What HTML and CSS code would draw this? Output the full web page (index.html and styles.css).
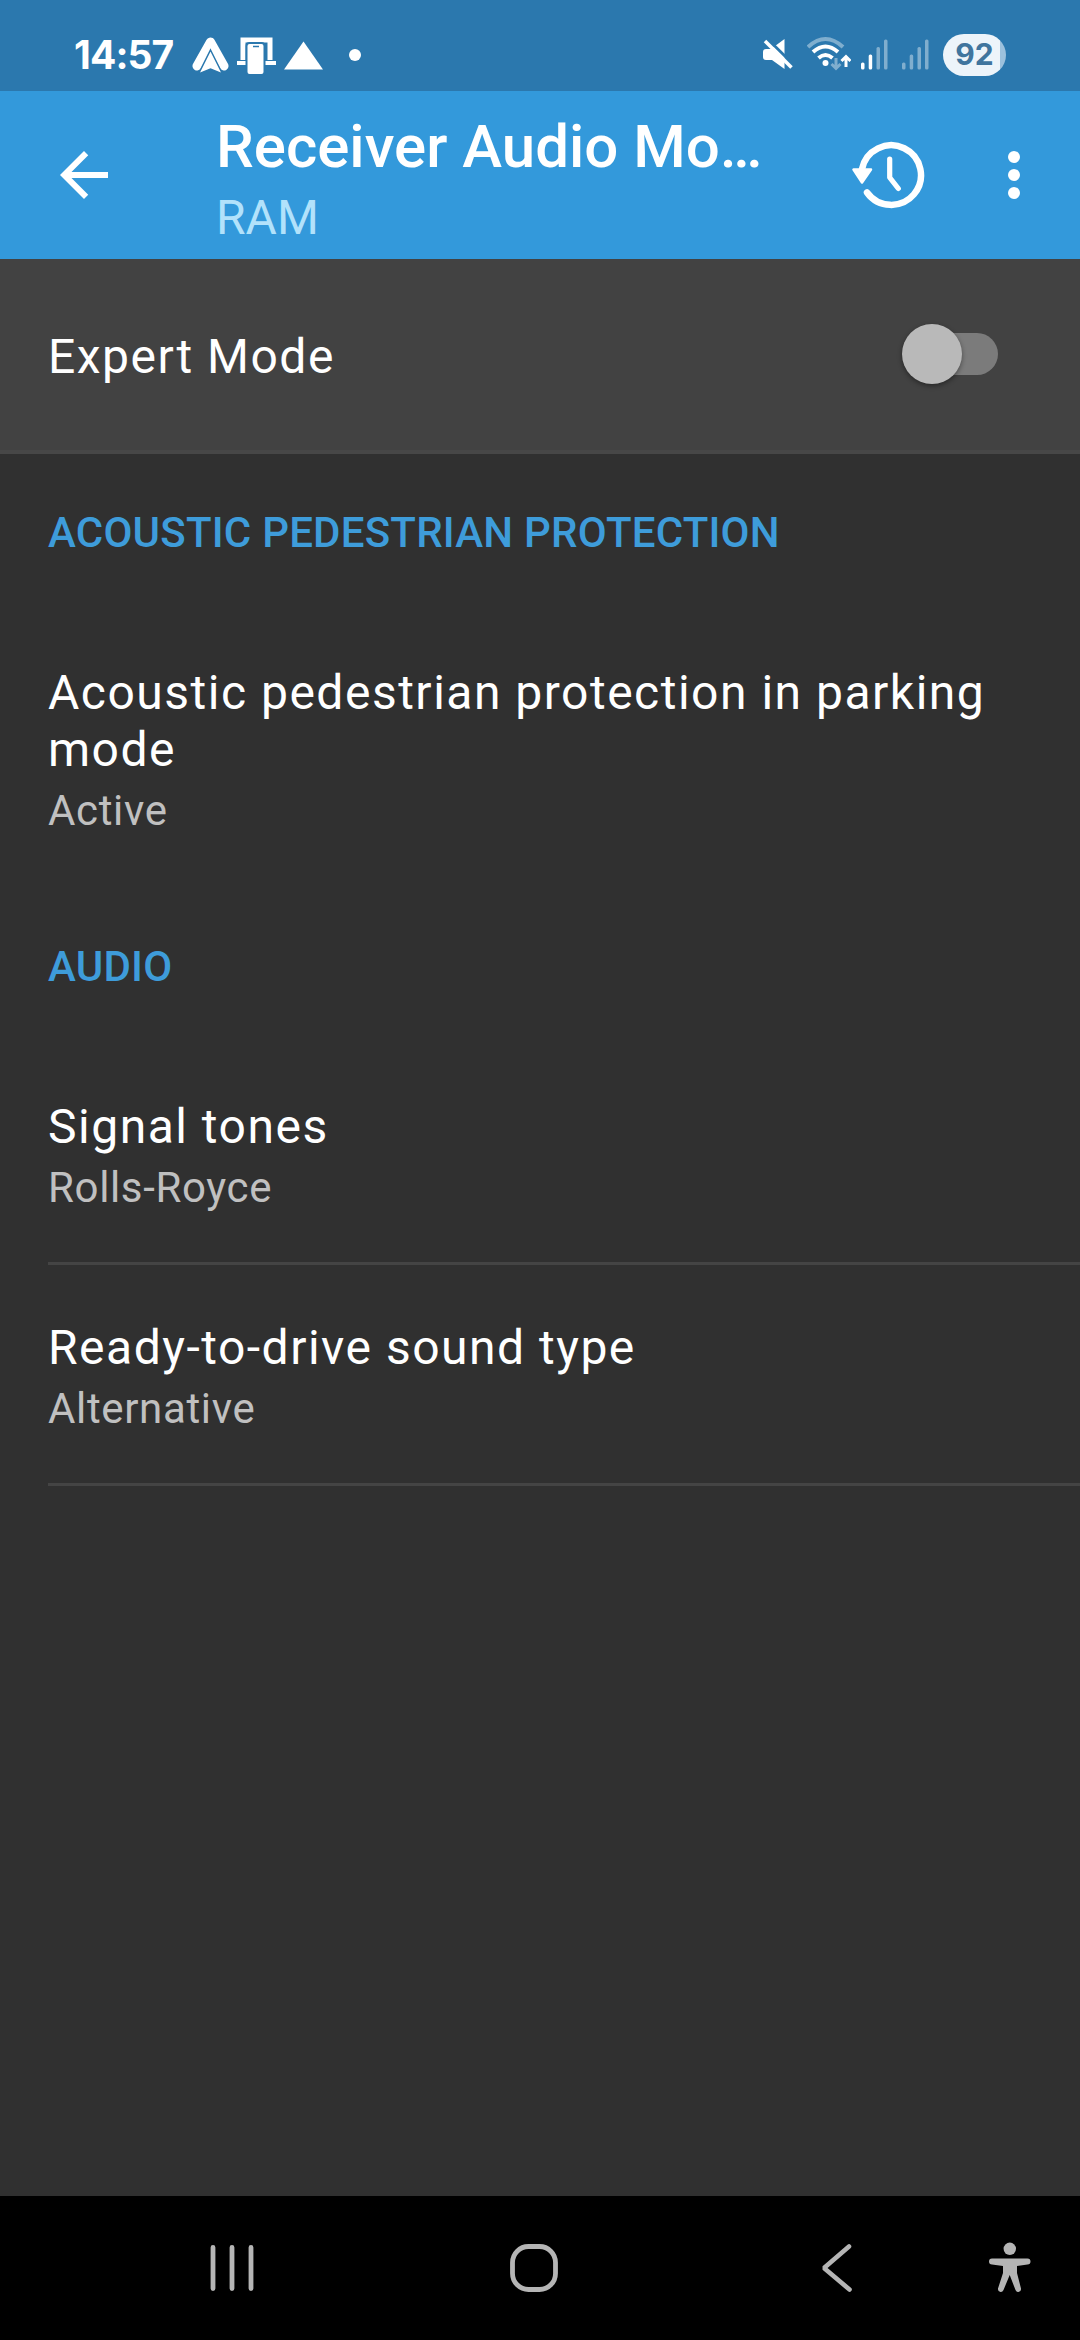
FILE: index.html
```html
<!DOCTYPE html>
<html lang="en">
<head>
<meta charset="utf-8">
<title>Receiver Audio Module</title>
<link rel="stylesheet" href="styles.css">
</head>
<body>
<div class="screen">
  <div class="status-bar">
    <span class="clock">14:57</span>
    <div class="notifications">
      <svg width="37" height="40" viewBox="0 0 37 40"><path d="M5 30L18.500 6L32 30" fill="none" stroke="#fff" stroke-width="9" stroke-linejoin="round" stroke-linecap="round"/><path d="M18.500 14L30.500 38L18.500 33L6.500 38Z" fill="#fff" stroke="#2b78ae" stroke-width="1.500"/></svg>
      <svg width="39" height="40" viewBox="0 0 39 40"><path d="M6 24V4H33V24" fill="none" stroke="#fff" stroke-width="5"/><path d="M0 27H39" stroke="#fff" stroke-width="4"/><rect x="9.500" y="7" width="18" height="32" rx="3" fill="#fff" stroke="#2b78ae" stroke-width="2"/><path d="M16 10.500H22" stroke="#2b78ae" stroke-width="1.500"/></svg>
      <svg width="39" height="40" viewBox="0 0 39 40"><path d="M19.500 5.500L39 33.500H0Z" fill="#fff"/></svg>
      <span class="more-dot"></span>
    </div>
    <div class="indicators">
      <svg width="30" height="44" viewBox="0 0 30 44"><path d="M0 18Q0 15 3 15H8L21.500 5V35L9 26H3Q0 26 0 23Z" fill="#fff"/><path d="M4 4.500L31 31" stroke="#2b78ae" stroke-width="3"/><path d="M2 7L28.500 33.500" stroke="#fff" stroke-width="3.600"/></svg>
      <svg class="wifi" width="44" height="44" viewBox="0 0 44 44" fill="none" stroke="#fff" stroke-width="4"><path d="M1 13Q18.500-3 36 13" opacity=".4"/><path d="M6 18Q18.500 7 31 18M11.500 24Q18.500 18 25.500 24"/><circle cx="18.500" cy="29" r="3" fill="#fff" stroke="none"/><path d="M29 24V34M24.500 30L29 34.500L33.500 30" stroke-width="3" opacity=".4"/><path d="M39 33V23M34.500 27L39 22.500L43.500 27" stroke-width="3"/></svg>
      <svg class="signal" width="27" height="44" viewBox="0 0 27 44" fill="#fff"><rect y="28.500" width="3.500" height="7" rx="1.500"/><rect x="7.700" y="20.500" width="3.500" height="15" rx="1.500"/><g opacity=".4"><rect x="15.500" y="13" width="3.500" height="22.500" rx="1.500"/><rect x="23" y="5.500" width="3.500" height="30" rx="1.500"/></g></svg>
      <svg class="signal second" width="27" height="44" viewBox="0 0 27 44" fill="#fff" opacity=".4"><rect y="28.500" width="3.500" height="7" rx="1.500"/><rect x="7.700" y="20.500" width="3.500" height="15" rx="1.500"/><rect x="15.500" y="13" width="3.500" height="22.500" rx="1.500"/><rect x="23" y="5.500" width="3.500" height="30" rx="1.500"/></svg>
      <span class="battery">92</span>
    </div>
  </div>

  <header class="app-bar">
    <svg class="back" width="48" height="48" viewBox="4 4 16 16"><path d="M20 11H7.830l5.590-5.590L12 4l-8 8 8 8 1.410-1.410L7.830 13H20v-2z" fill="#fff"/></svg>
    <div class="titles">
      <h1 class="title">Receiver Audio Mo…</h1>
      <p class="subtitle">RAM</p>
    </div>
    <svg class="history" width="76" height="70" viewBox="0 0 76 70"><path d="M12 29A29.800 29.800 0 1 1 17 52.500" fill="none" stroke="#fff" stroke-width="6.500" stroke-linecap="round"/><path d="M3.500 29.500H21L12 42.500Z" fill="#fff" stroke="#fff" stroke-width="2.500" stroke-linejoin="round"/><path d="M39.700 19V37.500L48.300 48.500" fill="none" stroke="#fff" stroke-width="5.200" stroke-linecap="round" stroke-linejoin="round"/></svg>
    <svg class="overflow" width="12" height="48" viewBox="0 0 12 48" fill="#fff"><circle cx="6" cy="6" r="6"/><circle cx="6" cy="24" r="6"/><circle cx="6" cy="42" r="6"/></svg>
  </header>

  <div class="expert">
    <span class="name">Expert Mode</span>
    <span class="switch"><span class="thumb"></span></span>
  </div>

  <main class="settings">
    <h2 class="category">ACOUSTIC PEDESTRIAN PROTECTION</h2>
    <div class="item">
      <div class="name">Acoustic pedestrian protection in parking mode</div>
      <div class="value">Active</div>
    </div>
    <h2 class="category later">AUDIO</h2>
    <div class="item ruled">
      <div class="name">Signal tones</div>
      <div class="value">Rolls-Royce</div>
    </div>
    <div class="item ruled">
      <div class="name">Ready-to-drive sound type</div>
      <div class="value">Alternative</div>
    </div>
  </main>

  <nav class="nav-bar">
    <svg class="recents" width="44" height="48" viewBox="0 0 44 48"><path d="M3 3.500V44.500M22 3.500V44.500M41 3.500V44.500" stroke="#b5b5b5" stroke-width="4.800" stroke-linecap="round"/></svg>
    <svg class="home" width="48" height="48" viewBox="0 0 48 48"><rect x="2.500" y="2.500" width="43" height="43" rx="16" fill="none" stroke="#b5b5b5" stroke-width="4.800"/></svg>
    <svg class="prev" width="32" height="48" viewBox="0 0 32 48"><path d="M28 2.500L3 24L28.500 45.500" fill="none" stroke="#b5b5b5" stroke-width="4.600" stroke-linecap="round" stroke-linejoin="bevel"/></svg>
    <svg class="access" width="42" height="52" viewBox="0 0 42 52" fill="#b5b5b5"><circle cx="20.800" cy="7.800" r="6.200"/><path d="M3 17.500H38.500A3 3 0 0 1 38.500 23.500L28 25V32L32 47.500Q32.500 50.500 29.500 51Q27.500 51.300 26.500 49L20.700 34L14.500 49Q13.500 51.300 11.500 51Q8.500 50.500 9 47.500L14 32V25L3 23.500A3 3 0 0 1 3 17.500Z"/></svg>
  </nav>
</div>
</body>
</html>
```

FILE: styles.css
```css
* { box-sizing: border-box; }
body { margin: 0; background: #303030; font-family: Roboto, "Noto Sans", sans-serif; }
h1, h2, p { margin: 0; }
svg { display: block; flex: none; }

.screen { display: flex; flex-direction: column; width: 1080px; height: 2340px; overflow: hidden; }

.status-bar { display: flex; align-items: flex-start; flex: none; height: 91px; padding: 34px 74px 0; background: #2b78ae; color: #fff; }
.clock { width: 118px; font: 700 39px/42px Inter, sans-serif; letter-spacing: -0.9px; white-space: nowrap; }
.notifications { display: flex; gap: 8px; padding-top: 2px; }
.more-dot { width: 12px; height: 12px; margin: 13px 0 0 18px; border-radius: 50%; background: #fff; }
.indicators { display: flex; margin-left: auto; }
.wifi { margin-left: 14px; }
.signal { margin-left: 10px; }
.signal.second { margin-left: 14px; }
.battery { width: 63px; height: 42px; margin-left: 14px; border-radius: 21px; background: linear-gradient(90deg, #edf4fa 91%, #9cc1dd 91%); color: #40759e; font: 700 30px/41px Inter, sans-serif; text-align: center; }

.app-bar { display: flex; align-items: center; flex: none; height: 168px; padding: 0 60px; background: #3399db; color: #fff; }
.titles { width: 552px; margin-left: 108px; padding-top: 7px; }
.title { white-space: nowrap; font-size: 60px; font-weight: 500; line-height: 72px; }
.subtitle { padding-top: 7px; color: #b2e2fb; font-size: 48px; line-height: 56px; }
.history { margin-left: 82px; }
.overflow { margin-left: 82px; }

.expert { display: flex; align-items: flex-start; justify-content: space-between; flex: none; height: 195px; padding: 69px 82px 0 48px; background: #424242; border-bottom: 4px solid #474747; }
.name { color: #fff; font-size: 48px; line-height: 57px; letter-spacing: 1.5px; }
.switch { display: flex; align-items: center; width: 84px; height: 42px; margin-top: 5px; border-radius: 21px; background: #7b7b7b; }
.thumb { width: 60px; height: 60px; margin-left: -12px; flex: none; border-radius: 50%; background: #b9b9b9; box-shadow: 0 2px 5px #0006; }

.settings { flex: 1; padding-left: 48px; }
.category { padding-top: 54px; color: #3e9cda; font-size: 42px; font-weight: 500; line-height: 50px; letter-spacing: 0.22px; }
.category.later { padding-top: 106px; }
.item { padding: 106px 48px 0 0; }
.item .value { padding-top: 8px; color: #c0c0c0; font-size: 42px; line-height: 50px; letter-spacing: 0.65px; }
.ruled { height: 221px; border-bottom: 3px solid #444; }
.later + .ruled { height: 273px; }
.ruled + .ruled { padding-top: 54px; }

.nav-bar { display: flex; align-items: flex-start; flex: none; height: 144px; padding-top: 48px; background: #000; }
.recents { margin-left: 210px; }
.home { margin-left: 256px; }
.prev { margin-left: 263px; }
.access { margin: -3px 0 0 136px; }
```
